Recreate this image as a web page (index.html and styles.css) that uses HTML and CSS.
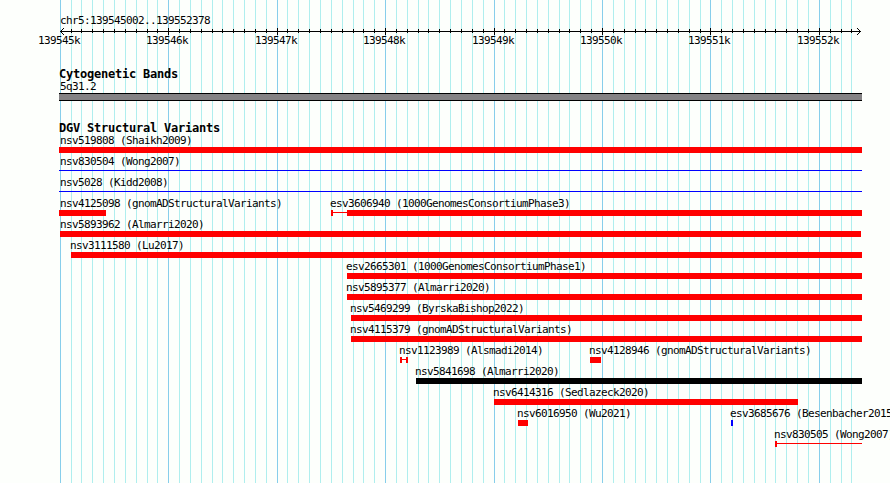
FILE: index.html
```
<!DOCTYPE html>
<html lang="en">

<head>
    <meta charset="UTF-8">
    <meta name="viewport" content="width=device-width, initial-scale=1.0">
    <title>chr5:139545002..139552378</title>
    <link rel="stylesheet" href="styles.css">
</head>

<body>

    <div class="browser">
        <svg class="gridlines" width="890" height="483" shape-rendering="crispEdges">
            <path id="minorLines" class="minor" />
            <path id="majorLines" class="major" />
        </svg>

        <div class="tracks">
            <div class="track scale">
                <div class="label region">chr5:139545002..139552378</div>
                <svg class="ruler" width="890" height="8" shape-rendering="crispEdges">
                    <path d="M60 3.5H861" />
                    <path id="ticks" />
                    <path d="M61.5 2v1M62.5 1v1M63.5 0v1M61.5 4v1M62.5 5v1M63.5 6v1" />
                    <path d="M859.5 2v1M858.5 1v1M857.5 0v1M859.5 4v1M858.5 5v1M857.5 6v1" />
                </svg>
                <div class="ruler-labels" id="rulerLabels"></div>
            </div>

            <div class="track cytoband">
                <h2>Cytogenetic Bands</h2>
                <div class="label">5q31.2</div>
                <div class="band"></div>
            </div>

            <div class="track variants">
                <h2>DGV Structural Variants</h2>
                <div id="variants"></div>
            </div>
        </div>
    </div>

    <script src="script.js"></script>

</body>

</html>
```
FILE: styles.css
```
body {
    margin: 0;
    background-color: #fdfffc;
    color: black;
    font-family: "DejaVu Sans Mono", monospace;
}

.browser {
    display: grid;
    width: 890px;
    height: 483px;
    overflow: hidden;
}

.gridlines,
.tracks {
    grid-area: 1 / 1;
    min-width: 0;
}

.gridlines path,
.ruler path {
    fill: none;
    stroke: black;
    stroke-width: 1;
}

.gridlines .minor {
    stroke: #afeeee;
}

.gridlines .major {
    stroke: #87ceeb;
}

.tracks {
    z-index: 1;
    padding-top: 14px;
}

svg {
    display: block;
}

.label {
    height: 13px;
    font-size: 11px;
    line-height: 13px;
    letter-spacing: -0.62px;
    white-space: nowrap;
}

.region,
.cytoband .label {
    margin-left: 60px;
}

.scale {
    height: 54px;
}

.region {
    height: 14px;
}

.ruler {
    height: 7px;
    margin-bottom: -1px;
}

.ruler-labels {
    display: grid;
}

.ruler-labels .label {
    grid-area: 1 / 1;
}

h2 {
    height: 12px;
    margin: 0 0 0 59px;
    font-size: 12px;
    line-height: 13px;
    letter-spacing: -0.22px;
}

.cytoband {
    height: 54px;
}

.band {
    box-sizing: border-box;
    width: 803px;
    height: 8px;
    margin-left: 59px;
    border: solid black;
    border-width: 1px 0;
    background-color: #848284;
}

.row {
    display: grid;
    height: 21px;
}

.feature {
    grid-area: 1 / 1;
    width: 0;
}

.glyph {
    display: flex;
    align-items: center;
    height: 6px;
    color: red;
}

.glyph.blue {
    color: blue;
}

.glyph.black {
    color: black;
}

.box {
    flex: none;
    height: 6px;
    background-color: currentColor;
}

.line {
    flex: none;
    height: 1px;
    margin-bottom: 1px;
    background-color: currentColor;
}
```
FILE: script.js
```
const MINOR = [71, 81, 92, 103, 114, 125, 136, 147, 157,
    179, 190, 201, 212, 222, 233, 244, 255, 266,
    287, 298, 309, 320, 331, 342, 353, 363, 374,
    396, 407, 418, 428, 439, 450, 461, 472, 483,
    504, 515, 526, 537, 548, 559, 569, 580, 591,
    613, 624, 635, 645, 656, 667, 678, 689, 700,
    721, 732, 743, 754, 765, 775, 786, 797, 808,
    830, 841, 851];
const MAJOR = [60, 168, 277, 385, 494, 602, 710, 819];

// labels start one pixel left of the glyph, but never before the panel edge
const PANEL_LEFT = 60;

// each part is [kind, width]
const ROWS = [
    [{ name: "nsv519808 (Shaikh2009)", x: 59, parts: [["box", 803]] }],
    [{ name: "nsv830504 (Wong2007)", x: 59, color: "blue", parts: [["line", 803]] }],
    [{ name: "nsv5028 (Kidd2008)", x: 59, color: "blue", parts: [["line", 803]] }],
    [
        { name: "nsv4125098 (gnomADStructuralVariants)", x: 59, parts: [["box", 47]] },
        { name: "esv3606940 (1000GenomesConsortiumPhase3)", x: 331, parts: [["box", 2], ["line", 14], ["box", 515]] }
    ],
    [{ name: "nsv5893962 (Almarri2020)", x: 60, parts: [["box", 801]] }],
    [{ name: "nsv3111580 (Lu2017)", x: 71, parts: [["box", 791]] }],
    [{ name: "esv2665301 (1000GenomesConsortiumPhase1)", x: 347, parts: [["box", 515]] }],
    [{ name: "nsv5895377 (Almarri2020)", x: 347, parts: [["box", 515]] }],
    [{ name: "nsv5469299 (ByrskaBishop2022)", x: 351, parts: [["box", 511]] }],
    [{ name: "nsv4115379 (gnomADStructuralVariants)", x: 351, parts: [["box", 511]] }],
    [
        { name: "nsv1123989 (Alsmadi2014)", x: 400, parts: [["box", 2], ["line", 4], ["box", 2]] },
        { name: "nsv4128946 (gnomADStructuralVariants)", x: 590, parts: [["box", 11]] }
    ],
    [{ name: "nsv5841698 (Almarri2020)", x: 416, color: "black", parts: [["box", 446]] }],
    [{ name: "nsv6414316 (Sedlazeck2020)", x: 494, parts: [["box", 304]] }],
    [
        { name: "nsv6016950 (Wu2021)", x: 518, parts: [["box", 10]] },
        { name: "esv3685676 (Besenbacher2015)", x: 731, color: "blue", parts: [["box", 2]] }
    ],
    [{ name: "nsv830505 (Wong2007)", x: 775, parts: [["box", 2], ["line", 85]] }]
];

function verticals(xs, y, height) {
    return xs.map(x => `M${x + 0.5} ${y}v${height}`).join("");
}

document.getElementById("minorLines").setAttribute("d", verticals(MINOR, 0, 483));
document.getElementById("majorLines").setAttribute("d", verticals(MAJOR, 0, 483));
document.getElementById("ticks").setAttribute("d", verticals(MINOR, 1, 4) + verticals(MAJOR.slice(1), 0, 7));

const rulerLabels = document.getElementById("rulerLabels");
MAJOR.forEach((x, i) => {
    const label = document.createElement("div");
    label.className = "label";
    label.style.marginLeft = (x - 22) + "px";
    label.textContent = (139545 + i) + "k";
    rulerLabels.append(label);
});

const variants = document.getElementById("variants");
ROWS.forEach(features => {
    const row = document.createElement("div");
    row.className = "row";

    features.forEach(f => {
        const feature = document.createElement("div");
        feature.className = "feature";
        feature.style.marginLeft = f.x + "px";

        const label = document.createElement("div");
        label.className = "label";
        label.style.marginLeft = (Math.max(f.x - 1, PANEL_LEFT) - f.x) + "px";
        label.textContent = f.name;

        const glyph = document.createElement("div");
        glyph.className = "glyph " + (f.color || "red");
        f.parts.forEach(([kind, width]) => {
            const part = document.createElement("div");
            part.className = kind;
            part.style.width = width + "px";
            glyph.append(part);
        });

        feature.append(label, glyph);
        row.append(feature);
    });

    variants.append(row);
});
```
